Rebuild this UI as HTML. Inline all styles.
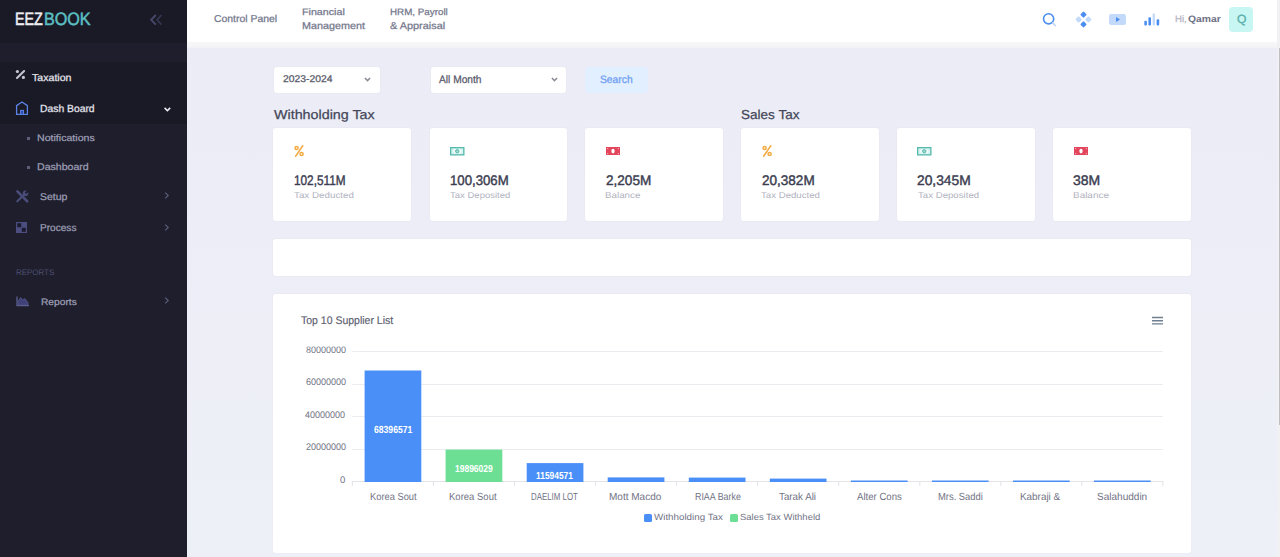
<!DOCTYPE html>
<html><head><meta charset="utf-8"><style>
html,body{margin:0;padding:0}
body{width:1280px;height:557px;overflow:hidden;position:relative;background:linear-gradient(#ebecf5 48px,#ecedf6 200px,#eef0f8 557px);font-family:"Liberation Sans",sans-serif}
.t{position:absolute;white-space:nowrap;line-height:1;font-family:"Liberation Sans",sans-serif;text-rendering:geometricPrecision;transform-origin:0 0}
.box{position:absolute;background:#fff;border-radius:3px;box-shadow:0 0 2px rgba(82,63,105,0.05)}
</style></head><body>
<div style="position:absolute;left:0;top:0;width:187px;height:557px;background:#1e1e2d"></div>
<div style="position:absolute;left:0;top:0;width:187px;height:43px;background:#1a1a27"></div>
<div style="position:absolute;left:0;top:62px;width:187px;height:62px;background:#1a1a27"></div>
<svg style="position:absolute;left:148.5px;top:13px" width="15" height="13" viewBox="0 0 15 13"><path d="M12.5 2L8 6.8L12.5 11.6" fill="none" stroke="#34364f" stroke-width="1.8"/><path d="M6.8 2L2.2 6.8L6.8 11.6" fill="none" stroke="#47496c" stroke-width="1.9"/></svg>
<svg style="position:absolute;left:15px;top:69px" width="11" height="11" viewBox="0 0 11 11"><circle cx="2.4" cy="2.5" r="1.6" fill="#c4c5d2"/><circle cx="8.4" cy="8.4" r="1.6" fill="#c4c5d2"/><path d="M2 8.9L9.1 2" stroke="#c4c5d2" stroke-width="2.1" stroke-linecap="round"/></svg>
<svg style="position:absolute;left:15px;top:101px" width="15" height="15" viewBox="0 0 15 15"><path d="M1.6 4.6L7 1L12.4 4.6V13.4H1.6Z" fill="none" stroke="#5a82e4" stroke-width="1.3" stroke-linejoin="round"/><rect x="5.6" y="9.4" width="2.9" height="4" fill="#2c47a8" stroke="#5a82e4" stroke-width="1.1"/></svg>
<svg style="position:absolute;left:163px;top:105.5px" width="9" height="7" viewBox="0 0 9 7"><path d="M1.6 1.9L4.4 4.6L7.2 1.9" fill="none" stroke="#eeeef4" stroke-width="1.5"/></svg>
<div style="position:absolute;left:26.5px;top:137px;width:3px;height:3px;background:#5d5f7a"></div>
<div style="position:absolute;left:26.5px;top:165.5px;width:3px;height:3px;background:#5d5f7a"></div>
<svg style="position:absolute;left:15px;top:189px" width="15" height="15" viewBox="0 0 15 15"><path d="M2.4 2.4L12.2 12.2" stroke="#4a4c7a" stroke-width="2.7" stroke-linecap="round"/><path d="M2.3 12.3L9 5.8" stroke="#4a4c7a" stroke-width="2.1" stroke-linecap="round"/><circle cx="10.6" cy="4.3" r="2.8" fill="#4a4c7a"/><rect x="-1.1" y="-1.9" width="2.2" height="3.8" transform="translate(12 2.9) rotate(45)" fill="#1e1e2d"/></svg>
<svg style="position:absolute;left:163.5px;top:191.2px" width="6" height="9" viewBox="0 0 6 9"><path d="M1.2 1.6L4.2 4.5L1.2 7.4" fill="none" stroke="#5a5c74" stroke-width="1.2"/></svg>
<svg style="position:absolute;left:163.5px;top:222.5px" width="6" height="9" viewBox="0 0 6 9"><path d="M1.2 1.6L4.2 4.5L1.2 7.4" fill="none" stroke="#5a5c74" stroke-width="1.2"/></svg>
<svg style="position:absolute;left:163.5px;top:296.3px" width="6" height="9" viewBox="0 0 6 9"><path d="M1.2 1.6L4.2 4.5L1.2 7.4" fill="none" stroke="#5a5c74" stroke-width="1.2"/></svg>
<svg style="position:absolute;left:16px;top:222px" width="11" height="11" viewBox="0 0 11 11"><rect x="0" y="0" width="11" height="11" fill="#4c4e80"/><rect x="1.2" y="1.2" width="4" height="4" fill="#1b1b2e"/><rect x="5.8" y="5.8" width="4" height="4" fill="#1b1b2e"/></svg>
<svg style="position:absolute;left:15.5px;top:296px" width="14" height="11" viewBox="0 0 14 11"><path d="M2.2 9.2V5L4.6 1.6L6.6 3.8L8.8 2.6L12 6.6V9.2Z" fill="#3f4178" stroke="#56588a" stroke-width="0.8"/><path d="M1 0.5V9.6H13" fill="none" stroke="#5c5e90" stroke-width="1.3"/></svg>
<div style="position:absolute;left:187px;top:0;width:1090px;height:42px;background:#fff"></div>
<div style="position:absolute;left:187px;top:42px;width:1090px;height:6px;background:linear-gradient(#f7f7f9,#f3f3f6)"></div>
<svg style="position:absolute;left:1042px;top:12px" width="15" height="15" viewBox="0 0 15 15"><circle cx="6.6" cy="6.8" r="5.1" fill="none" stroke="#4b8ef0" stroke-width="1.6"/><path d="M10.6 10.8L13.2 13.6" stroke="#b9d3fa" stroke-width="1.5" stroke-linecap="round"/></svg>
<svg style="position:absolute;left:1075px;top:11px" width="17" height="17" viewBox="0 0 17 17"><rect x="-2.4" y="-2.4" width="4.8" height="4.8" rx="1" transform="translate(8.5 3.6) rotate(45)" fill="#4b8ef0"/><rect x="-2.4" y="-2.4" width="4.8" height="4.8" rx="1" transform="translate(8.5 13.4) rotate(45)" fill="#4b8ef0"/><rect x="-2.4" y="-2.4" width="4.8" height="4.8" rx="1" transform="translate(3.6 8.5) rotate(45)" fill="#c4dafb"/><rect x="-2.4" y="-2.4" width="4.8" height="4.8" rx="1" transform="translate(13.4 8.5) rotate(45)" fill="#c4dafb"/></svg>
<svg style="position:absolute;left:1109px;top:13.5px" width="17" height="11" viewBox="0 0 17 11"><rect x="0" y="0" width="17" height="11" rx="2.2" fill="#c3dafb"/><path d="M7 3L11 5.5L7 8Z" fill="#4b8ef0"/></svg>
<svg style="position:absolute;left:1144px;top:13px" width="16" height="13" viewBox="0 0 16 13"><rect x="0.3" y="7.7" width="2.6" height="4.8" rx="1" fill="#4b8ef0"/><rect x="4.4" y="4.3" width="2.6" height="8.2" rx="1" fill="#4b8ef0"/><rect x="8.6" y="0.5" width="2.4" height="12" rx="1" fill="#c4dafb"/><rect x="12.6" y="6.2" width="2.6" height="6.3" rx="1" fill="#4b8ef0"/></svg>
<div style="position:absolute;left:1229px;top:7px;width:24px;height:24.5px;border-radius:4px;background:#c8f6f3"></div>
<div class="box" style="left:273.5px;top:67px;width:106.5px;height:26px"></div>
<svg style="position:absolute;left:364px;top:76.6px" width="7" height="5" viewBox="0 0 7 5"><path d="M0.9 0.9L3.5 3.6L6.1 0.9" fill="none" stroke="#8a8c95" stroke-width="1.5"/></svg>
<div class="box" style="left:430.5px;top:67px;width:135.5px;height:26px"></div>
<svg style="position:absolute;left:550.6px;top:76.6px" width="7" height="5" viewBox="0 0 7 5"><path d="M0.9 0.9L3.5 3.6L6.1 0.9" fill="none" stroke="#8a8c95" stroke-width="1.5"/></svg>
<div style="position:absolute;left:585px;top:67px;width:63px;height:26px;border-radius:4px;background:#e1effe"></div>
<div class="box" style="left:273px;top:128px;width:138px;height:93px"></div>
<svg style="position:absolute;left:294px;top:144px" width="11" height="14" viewBox="0 0 11 14"><circle cx="2.6" cy="4" r="1.6" fill="#fbe3bd" stroke="#f2ab42" stroke-width="1.4"/><circle cx="7.6" cy="10" r="1.6" fill="#fbe3bd" stroke="#f2ab42" stroke-width="1.4"/><path d="M1.6 12.2L8.8 1.8" stroke="#f2ab42" stroke-width="1.5" stroke-linecap="round"/></svg>
<div class="box" style="left:430px;top:128px;width:137px;height:93px"></div>
<svg style="position:absolute;left:449.7px;top:146.6px" width="15" height="9" viewBox="0 0 15 9"><rect x="0.65" y="0.65" width="13.2" height="7.2" fill="#d6f2ee" stroke="#56b9ad" stroke-width="1.3"/><ellipse cx="7.25" cy="4.25" rx="4.2" ry="2.3" fill="#f4fbfa"/><circle cx="7.25" cy="4.25" r="1.7" fill="#9ad8d0" stroke="#56b9ad" stroke-width="1"/></svg>
<div class="box" style="left:585px;top:128px;width:138px;height:93px"></div>
<svg style="position:absolute;left:606px;top:147px" width="14" height="8.2" viewBox="0 0 14 8.2"><rect x="0" y="0" width="14" height="8.2" fill="#e2455c"/><ellipse cx="7" cy="4.1" rx="1.7" ry="2.3" fill="#fff"/><circle cx="1.7" cy="1.6" r="0.6" fill="#f7c9d0"/><circle cx="12.3" cy="1.6" r="0.6" fill="#f7c9d0"/><circle cx="1.7" cy="6.6" r="0.6" fill="#f7c9d0"/><circle cx="12.3" cy="6.6" r="0.6" fill="#f7c9d0"/></svg>
<div class="box" style="left:741px;top:128px;width:138px;height:93px"></div>
<svg style="position:absolute;left:762px;top:144px" width="11" height="14" viewBox="0 0 11 14"><circle cx="2.6" cy="4" r="1.6" fill="#fbe3bd" stroke="#f2ab42" stroke-width="1.4"/><circle cx="7.6" cy="10" r="1.6" fill="#fbe3bd" stroke="#f2ab42" stroke-width="1.4"/><path d="M1.6 12.2L8.8 1.8" stroke="#f2ab42" stroke-width="1.5" stroke-linecap="round"/></svg>
<div class="box" style="left:897px;top:128px;width:138px;height:93px"></div>
<svg style="position:absolute;left:916.7px;top:146.6px" width="15" height="9" viewBox="0 0 15 9"><rect x="0.65" y="0.65" width="13.2" height="7.2" fill="#d6f2ee" stroke="#56b9ad" stroke-width="1.3"/><ellipse cx="7.25" cy="4.25" rx="4.2" ry="2.3" fill="#f4fbfa"/><circle cx="7.25" cy="4.25" r="1.7" fill="#9ad8d0" stroke="#56b9ad" stroke-width="1"/></svg>
<div class="box" style="left:1053px;top:128px;width:138px;height:93px"></div>
<svg style="position:absolute;left:1074px;top:147px" width="14" height="8.2" viewBox="0 0 14 8.2"><rect x="0" y="0" width="14" height="8.2" fill="#e2455c"/><ellipse cx="7" cy="4.1" rx="1.7" ry="2.3" fill="#fff"/><circle cx="1.7" cy="1.6" r="0.6" fill="#f7c9d0"/><circle cx="12.3" cy="1.6" r="0.6" fill="#f7c9d0"/><circle cx="1.7" cy="6.6" r="0.6" fill="#f7c9d0"/><circle cx="12.3" cy="6.6" r="0.6" fill="#f7c9d0"/></svg>
<div class="box" style="left:273px;top:239px;width:918px;height:37px"></div>
<div class="box" style="left:273px;top:294px;width:918px;height:259px"></div>
<svg style="position:absolute;left:1151px;top:316px" width="13" height="10" viewBox="0 0 13 10"><path d="M1 1.5H12M1 4.7H12M1 7.9H12" stroke="#6e7f8f" stroke-width="1.4"/></svg>
<svg style="position:absolute;left:0;top:0" width="1280" height="557" viewBox="0 0 1280 557"><line x1="352.4" y1="351.5" x2="1163" y2="351.5" stroke="#ececf0" stroke-width="1"/><line x1="352.4" y1="384.5" x2="1163" y2="384.5" stroke="#ececf0" stroke-width="1"/><line x1="352.4" y1="416.5" x2="1163" y2="416.5" stroke="#ececf0" stroke-width="1"/><line x1="352.4" y1="449.5" x2="1163" y2="449.5" stroke="#ececf0" stroke-width="1"/><line x1="352.4" y1="481.5" x2="1163" y2="481.5" stroke="#e3e3e8" stroke-width="1"/><line x1="352.4" y1="481" x2="352.4" y2="486" stroke="#e3e3e8" stroke-width="1"/><line x1="433.4" y1="481" x2="433.4" y2="486" stroke="#e3e3e8" stroke-width="1"/><line x1="514.5" y1="481" x2="514.5" y2="486" stroke="#e3e3e8" stroke-width="1"/><line x1="595.5" y1="481" x2="595.5" y2="486" stroke="#e3e3e8" stroke-width="1"/><line x1="676.6" y1="481" x2="676.6" y2="486" stroke="#e3e3e8" stroke-width="1"/><line x1="757.6" y1="481" x2="757.6" y2="486" stroke="#e3e3e8" stroke-width="1"/><line x1="838.7" y1="481" x2="838.7" y2="486" stroke="#e3e3e8" stroke-width="1"/><line x1="919.8" y1="481" x2="919.8" y2="486" stroke="#e3e3e8" stroke-width="1"/><line x1="1000.8" y1="481" x2="1000.8" y2="486" stroke="#e3e3e8" stroke-width="1"/><line x1="1081.8" y1="481" x2="1081.8" y2="486" stroke="#e3e3e8" stroke-width="1"/><line x1="1162.9" y1="481" x2="1162.9" y2="486" stroke="#e3e3e8" stroke-width="1"/><rect x="364.6" y="370.5" width="56.7" height="111.5" fill="#4a8ff8"/><rect x="445.6" y="449.6" width="56.7" height="32.4" fill="#6ddf95"/><rect x="526.7" y="463.1" width="56.7" height="18.9" fill="#4a8ff8"/><rect x="607.7" y="477.4" width="56.7" height="4.6" fill="#4a8ff8"/><rect x="688.8" y="477.6" width="56.7" height="4.4" fill="#4a8ff8"/><rect x="769.8" y="478.6" width="56.7" height="3.4" fill="#4a8ff8"/><rect x="850.9" y="480.5" width="56.7" height="1.5" fill="#4a8ff8"/><rect x="931.9" y="480.5" width="56.7" height="1.5" fill="#4a8ff8"/><rect x="1013.0" y="480.5" width="56.7" height="1.5" fill="#4a8ff8"/><rect x="1094.0" y="480.5" width="56.7" height="1.5" fill="#4a8ff8"/></svg>
<div style="position:absolute;left:644px;top:513.5px;width:8px;height:8px;border-radius:1.5px;background:#4a8ff8"></div>
<div style="position:absolute;left:730px;top:513.5px;width:8px;height:8px;border-radius:1.5px;background:#6ddf95"></div>
<div style="position:absolute;left:1277px;top:0;width:3px;height:557px;background:#f1f1f4"></div>
<div style="position:absolute;left:1278.5px;top:48px;width:1.5px;height:377px;background:#bdbdc2"></div>
<div class="t" style="left:15.38px;top:11.16px;font-size:17.93px;color:#ededf2;-webkit-text-stroke:0.55px #ededf2;transform:scaleX(0.7994)">EEZ</div>
<div class="t" style="left:44.02px;top:11.16px;font-size:17.93px;color:#5bbfc2;-webkit-text-stroke:0.55px #5bbfc2;transform:scaleX(0.9006)">BOOK</div>
<div class="t" style="left:214.28px;top:15.49px;font-size:10.01px;color:#74778c;-webkit-text-stroke:0.25px #74778c;transform:scaleX(1.0423)">Control Panel</div>
<div class="t" style="left:302.18px;top:8.22px;font-size:9.27px;color:#74778c;-webkit-text-stroke:0.25px #74778c;transform:scaleX(1.1545)">Financial</div>
<div class="t" style="left:302.07px;top:21.62px;font-size:9.86px;color:#74778c;-webkit-text-stroke:0.25px #74778c;transform:scaleX(1.0982)">Management</div>
<div class="t" style="left:389.65px;top:8.22px;font-size:9.27px;color:#74778c;-webkit-text-stroke:0.25px #74778c;transform:scaleX(1.0581)">HRM, Payroll</div>
<div class="t" style="left:390.15px;top:21.62px;font-size:9.86px;color:#74778c;-webkit-text-stroke:0.25px #74778c;transform:scaleX(1.1071)">&amp; Appraisal</div>
<div class="t" style="left:1175.15px;top:14.72px;font-size:9.27px;color:#b5b5c3;-webkit-text-stroke:0.25px #b5b5c3;transform:scaleX(1.0393)">Hi,</div>
<div class="t" style="left:1188.11px;top:14.72px;font-size:9.27px;color:#6e7186;font-weight:700;transform:scaleX(1.1182)">Qamar</div>
<div class="t" style="left:1236.89px;top:13.57px;font-size:11.81px;color:#5aafab;-webkit-text-stroke:0.3px #5aafab;transform:scaleX(1.0246)">Q</div>
<div class="t" style="left:31.89px;top:74.29px;font-size:10.01px;color:#e4e4ec;-webkit-text-stroke:0.25px #e4e4ec;transform:scaleX(1.0608)">Taxation</div>
<div class="t" style="left:40.38px;top:105.14px;font-size:10.31px;color:#e4e4ec;-webkit-text-stroke:0.25px #e4e4ec;transform:scaleX(1.0045)">Dash Board</div>
<div class="t" style="left:37.00px;top:133.00px;font-size:9.41px;color:#9c9db3;-webkit-text-stroke:0.25px #9c9db3;transform:scaleX(1.1264)">Notifications</div>
<div class="t" style="left:36.94px;top:162.74px;font-size:9.71px;color:#9c9db3;-webkit-text-stroke:0.25px #9c9db3;transform:scaleX(1.0896)">Dashboard</div>
<div class="t" style="left:40.07px;top:192.62px;font-size:9.86px;color:#9c9db3;-webkit-text-stroke:0.25px #9c9db3;transform:scaleX(1.0664)">Setup</div>
<div class="t" style="left:40.46px;top:223.69px;font-size:10.01px;color:#9c9db3;-webkit-text-stroke:0.25px #9c9db3;transform:scaleX(1.0095)">Process</div>
<div class="t" style="left:15.52px;top:268.94px;font-size:8.07px;color:#4e5070;transform:scaleX(0.9856)">REPORTS</div>
<div class="t" style="left:40.59px;top:297.00px;font-size:9.41px;color:#9c9db3;-webkit-text-stroke:0.25px #9c9db3;transform:scaleX(1.0853)">Reports</div>
<div class="t" style="left:283.34px;top:75.14px;font-size:9.71px;color:#575969;-webkit-text-stroke:0.25px #575969;transform:scaleX(1.0645)">2023-2024</div>
<div class="t" style="left:438.98px;top:74.55px;font-size:10.76px;color:#575969;-webkit-text-stroke:0.25px #575969;transform:scaleX(0.9479)">All Month</div>
<div class="t" style="left:599.86px;top:74.55px;font-size:10.76px;color:#6b9cf2;-webkit-text-stroke:0.25px #6b9cf2;transform:scaleX(0.9586)">Search</div>
<div class="t" style="left:273.61px;top:108.25px;font-size:13.00px;color:#454759;-webkit-text-stroke:0.25px #454759;transform:scaleX(1.1003)">Withholding Tax</div>
<div class="t" style="left:740.92px;top:108.25px;font-size:13.00px;color:#454759;-webkit-text-stroke:0.25px #454759;transform:scaleX(1.0421)">Sales Tax</div>
<div class="t" style="left:294.04px;top:173.99px;font-size:13.90px;color:#3b3d50;-webkit-text-stroke:0.42px #3b3d50;transform:scaleX(0.8494)">102,511M</div>
<div class="t" style="left:449.74px;top:173.99px;font-size:13.90px;color:#3b3d50;-webkit-text-stroke:0.42px #3b3d50;transform:scaleX(0.9497)">100,306M</div>
<div class="t" style="left:606.15px;top:173.99px;font-size:13.90px;color:#3b3d50;-webkit-text-stroke:0.42px #3b3d50;transform:scaleX(0.9759)">2,205M</div>
<div class="t" style="left:762.15px;top:173.99px;font-size:13.90px;color:#3b3d50;-webkit-text-stroke:0.42px #3b3d50;transform:scaleX(0.9743)">20,382M</div>
<div class="t" style="left:916.99px;top:173.99px;font-size:13.90px;color:#3b3d50;-webkit-text-stroke:0.42px #3b3d50;transform:scaleX(0.9931)">20,345M</div>
<div class="t" style="left:1072.78px;top:173.99px;font-size:13.90px;color:#3b3d50;-webkit-text-stroke:0.42px #3b3d50;transform:scaleX(1.0078)">38M</div>
<div class="t" style="left:294.11px;top:191.26px;font-size:8.52px;color:#b2b3c0;transform:scaleX(1.1513)">Tax Deducted</div>
<div class="t" style="left:450.11px;top:191.26px;font-size:8.52px;color:#b2b3c0;transform:scaleX(1.1181)">Tax Deposited</div>
<div class="t" style="left:604.97px;top:191.26px;font-size:8.52px;color:#b2b3c0;transform:scaleX(1.1498)">Balance</div>
<div class="t" style="left:761.18px;top:191.26px;font-size:8.52px;color:#b2b3c0;transform:scaleX(1.1321)">Tax Deducted</div>
<div class="t" style="left:917.52px;top:191.26px;font-size:8.52px;color:#b2b3c0;transform:scaleX(1.1323)">Tax Deposited</div>
<div class="t" style="left:1073.07px;top:191.26px;font-size:8.52px;color:#b2b3c0;transform:scaleX(1.1677)">Balance</div>
<div class="t" style="left:301.00px;top:315.60px;font-size:11.06px;color:#5c5e6e;-webkit-text-stroke:0.15px #5c5e6e;transform:scaleX(0.9495)">Top 10 Supplier List</div>
<div class="t" style="left:305.95px;top:345.00px;font-size:9.41px;color:#717385;transform:scaleX(0.9550)">80000000</div>
<div class="t" style="left:305.74px;top:378.27px;font-size:9.56px;color:#717385;transform:scaleX(0.9450)">60000000</div>
<div class="t" style="left:305.47px;top:410.67px;font-size:9.56px;color:#717385;transform:scaleX(0.9433)">40000000</div>
<div class="t" style="left:305.79px;top:443.07px;font-size:9.56px;color:#717385;transform:scaleX(0.9441)">20000000</div>
<div class="t" style="left:339.68px;top:476.47px;font-size:9.56px;color:#717385;transform:scaleX(0.9958)">0</div>
<div class="t" style="left:369.62px;top:493.04px;font-size:10.31px;color:#717385;transform:scaleX(0.9040)">Korea Sout</div>
<div class="t" style="left:449.18px;top:493.04px;font-size:10.31px;color:#717385;transform:scaleX(0.9236)">Korea Sout</div>
<div class="t" style="left:530.78px;top:493.04px;font-size:10.31px;color:#717385;transform:scaleX(0.7667)">DAELIM LOT</div>
<div class="t" style="left:609.25px;top:493.04px;font-size:10.31px;color:#717385;transform:scaleX(0.9732)">Mott Macdo</div>
<div class="t" style="left:694.66px;top:493.04px;font-size:10.31px;color:#717385;transform:scaleX(0.8617)">RIAA Barke</div>
<div class="t" style="left:779.42px;top:493.04px;font-size:10.31px;color:#717385;transform:scaleX(0.9521)">Tarak Ali</div>
<div class="t" style="left:856.63px;top:493.04px;font-size:10.31px;color:#717385;transform:scaleX(0.9320)">Alter Cons</div>
<div class="t" style="left:937.71px;top:493.04px;font-size:10.31px;color:#717385;transform:scaleX(0.9117)">Mrs. Saddi</div>
<div class="t" style="left:1020.47px;top:493.04px;font-size:10.31px;color:#717385;transform:scaleX(0.9608)">Kabraji &amp;</div>
<div class="t" style="left:1097.21px;top:493.04px;font-size:10.31px;color:#717385;transform:scaleX(0.9741)">Salahuddin</div>
<div class="t" style="left:373.86px;top:425.84px;font-size:10.31px;color:#ffffff;font-weight:700;transform:scaleX(0.8366)">68396571</div>
<div class="t" style="left:455.10px;top:465.36px;font-size:10.16px;color:#ffffff;font-weight:700;transform:scaleX(0.8354)">19896029</div>
<div class="t" style="left:536.49px;top:472.14px;font-size:10.31px;color:#ffffff;font-weight:700;transform:scaleX(0.8166)">11594571</div>
<div class="t" style="left:654.44px;top:513.38px;font-size:8.97px;color:#717385;transform:scaleX(1.0902)">Withholding Tax</div>
<div class="t" style="left:740.14px;top:513.38px;font-size:8.97px;color:#717385;transform:scaleX(1.0544)">Sales Tax Withheld</div>
</body></html>
